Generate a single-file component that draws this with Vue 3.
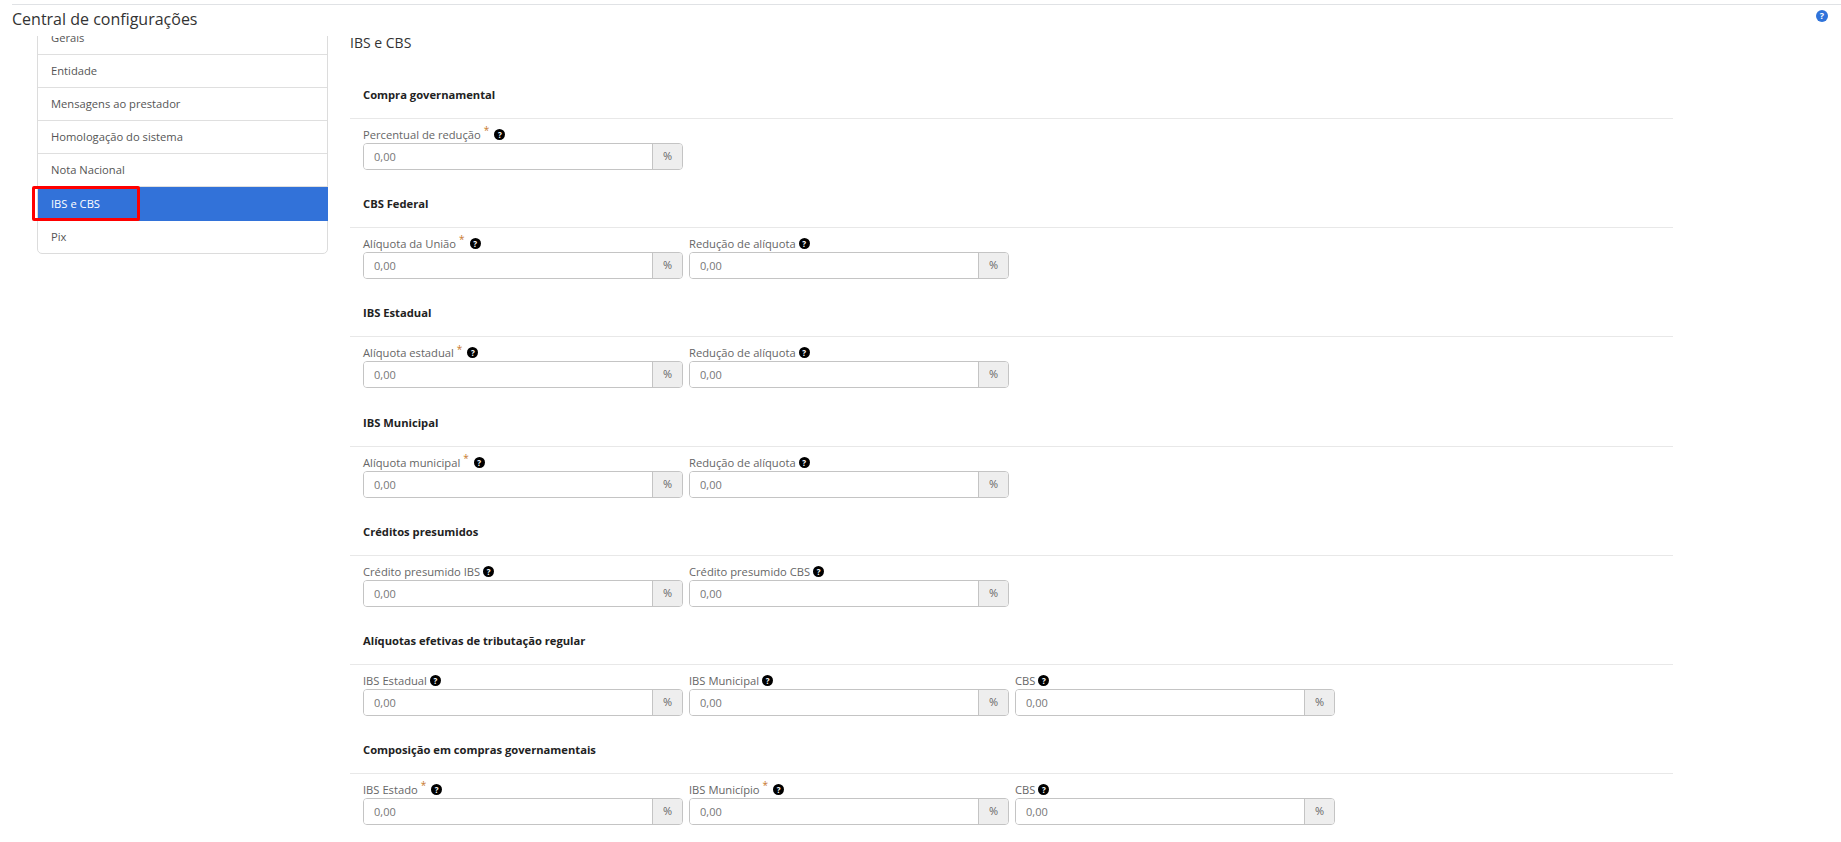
<script setup>
const menu = ['Gerais', 'Entidade', 'Mensagens ao prestador', 'Homologação do sistema', 'Nota Nacional', 'IBS e CBS', 'Pix']

const sections = [
  { title: 'Compra governamental', fields: [{ label: 'Percentual de redução', req: true }] },
  { title: 'CBS Federal', fields: [{ label: 'Alíquota da União', req: true }, { label: 'Redução de alíquota' }] },
  { title: 'IBS Estadual', fields: [{ label: 'Alíquota estadual', req: true }, { label: 'Redução de alíquota' }] },
  { title: 'IBS Municipal', fields: [{ label: 'Alíquota municipal', req: true }, { label: 'Redução de alíquota' }] },
  { title: 'Créditos presumidos', fields: [{ label: 'Crédito presumido IBS' }, { label: 'Crédito presumido CBS' }] },
  { title: 'Alíquotas efetivas de tributação regular', fields: [{ label: 'IBS Estadual' }, { label: 'IBS Municipal' }, { label: 'CBS' }] },
  { title: 'Composição em compras governamentais', fields: [{ label: 'IBS Estado', req: true }, { label: 'IBS Município', req: true }, { label: 'CBS' }] }
]
</script>

<template>
  <div class="page">
    <header class="top">
      <h1>Central de configurações</h1>
      <span class="help-main">?</span>
    </header>
    <div class="body">
      <aside class="side">
        <ul class="menu">
          <li v-for="item in menu" :key="item" :class="{ active: item === 'IBS e CBS' }">
            <span>{{ item }}</span>
            <i v-if="item === 'IBS e CBS'" class="mark"></i>
          </li>
        </ul>
      </aside>
      <main class="main">
        <h2>IBS e CBS</h2>
        <section v-for="s in sections" :key="s.title" class="sec">
          <h3>{{ s.title }}</h3>
          <div class="fields">
            <div v-for="f in s.fields" :key="f.label" class="field">
              <label>
                {{ f.label }}<sup v-if="f.req">*</sup>
                <span class="tip" :class="{ far: f.req }">?</span>
              </label>
              <div class="group">
                <input value="0,00" />
                <span class="addon">%</span>
              </div>
            </div>
          </div>
        </section>
      </main>
    </div>
  </div>
</template>

<style>
html, body { background: #fff; overflow: hidden; }
</style>

<style scoped>
.page {
  height: 842px;
  overflow: hidden;
  font-family: "Open Sans", sans-serif;
  color: #222;
}
.top {
  margin: 4px 0 0 12px;
  border-top: 1px solid #e0e2e5;
  height: 31px;
  display: flex;
  justify-content: space-between;
  align-items: center;
  padding-right: 13px;
  box-sizing: border-box;
}
.top h1 {
  margin: -2px 0 0;
  font-size: 16px;
  font-weight: 400;
  color: #333;
}
.help-main {
  width: 12px;
  height: 12px;
  border-radius: 50%;
  background: #2f73da;
  color: #fff;
  font-size: 9px;
  font-weight: 700;
  line-height: 12px;
  text-align: center;
  margin-top: -8px;
}
.body {
  display: flex;
  align-items: flex-start;
}
.side {
  margin-left: 37px;
  width: 291px;
  height: 226px;
  flex: none;
  /* the list is scrolled: cut at the top only, the red mark sticks out on the left */
  clip-path: inset(1px -10px 0 -10px);
}
.menu {
  list-style: none;
  margin: -14px 0 0;
  padding: 0;
  border: 1px solid #dcdcdc;
  border-radius: 0 0 5px 5px;
}
.menu li {
  height: 33px;
  box-sizing: border-box;
  border-bottom: 1px solid #dfdfdf;
  padding-left: 13px;
  font-size: 11.2px;
  line-height: 32px;
  color: #555;
  position: relative;
}
.menu li:last-child {
  border-bottom: 0;
  height: 32px;
}
.menu li.active {
  background: #3272d9;
  color: #fff;
  margin: 0 -1px 0 0;
  height: 34px;
  line-height: 33px;
  border-bottom: 0;
}
.mark {
  position: absolute;
  left: -6px;
  top: -1px;
  width: 108px;
  height: 35px;
  border: 3px solid #f00;
  border-radius: 2px;
  box-sizing: border-box;
}
.main {
  margin-left: 22px;
  width: 1323px;
  flex: none;
}
h2 {
  margin: 0;
  font-size: 14px;
  font-weight: 400;
  color: #333;
  line-height: 16px;
  height: 53px;
}
.sec {
  height: 109.2px;
}
h3 {
  margin: 0;
  height: 31px;
  box-sizing: border-box;
  padding: 1px 0 0 13px;
  font-size: 11.2px;
  font-weight: 700;
  line-height: 1;
  color: #222;
  border-bottom: 1px solid #e8e8e8;
}
.fields {
  display: flex;
  gap: 6px;
  padding: 7px 0 0 13px;
}
.field { width: 320px; }
label {
  display: block;
  height: 17px;
  font-size: 11.2px;
  line-height: 17px;
  color: #666;
  white-space: nowrap;
}
sup {
  color: #c8792e;
  font-size: 10px;
  line-height: 0;
  margin-left: 3px;
}
.tip {
  display: inline-block;
  width: 11px;
  height: 11px;
  margin-left: 3px;
  border-radius: 50%;
  background: #000;
  color: #fff;
  font-size: 8px;
  font-weight: 700;
  line-height: 11px;
  text-align: center;
  vertical-align: 1px;
}
.tip.far { margin-left: 5px; }
.group {
  display: flex;
  height: 27px;
  border: 1px solid #c4c4c4;
  border-radius: 4px;
  box-sizing: border-box;
  overflow: hidden;
}
input {
  flex: 1;
  min-width: 0;
  border: 0;
  outline: 0;
  padding: 0 10px;
  font: 11px "Open Sans", sans-serif;
  color: #777;
  background: #fff;
}
.addon {
  width: 30px;
  flex: none;
  box-sizing: border-box;
  background: #eee;
  border-left: 1px solid #c4c4c4;
  font-size: 11px;
  line-height: 23px;
  text-align: center;
  color: #666;
}
</style>
